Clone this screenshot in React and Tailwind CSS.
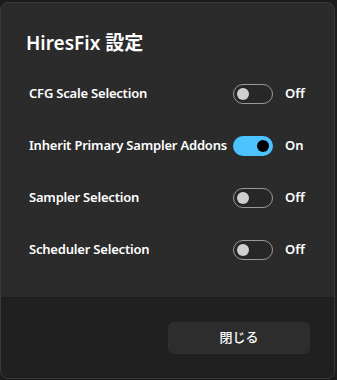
import React, { useState } from 'react'

function Toggle({ on, onChange }) {
  return (
    <button
      onClick={onChange}
      className={
        on
          ? 'flex h-5 w-10 items-center justify-end rounded-full bg-[#4cc2ff] px-[4px]'
          : 'flex h-5 w-10 items-center justify-start rounded-full border border-[#9a9a9a] bg-[#272727] px-[3px]'
      }
    >
      <span className={on ? 'block h-3 w-3 rounded-full bg-black' : 'block h-3 w-3 rounded-full bg-[#cfcfcf]'} />
    </button>
  )
}

const items = [
  { label: 'CFG Scale Selection', on: false },
  { label: 'Inherit Primary Sampler Addons', on: true },
  { label: 'Sampler Selection', on: false },
  { label: 'Scheduler Selection', on: false },
]

export default function App() {
  const [state, setState] = useState(items.map((i) => i.on))

  return (
    <div className="h-[380px] w-[337px] bg-[#1c1c1c] pt-[2px] font-['Noto_Sans','Noto_Sans_CJK_JP',sans-serif] text-white">
      <div className="flex h-[377px] w-[335px] flex-col overflow-hidden rounded-lg border border-[#3a3a3a] bg-[#2b2b2b]">
        <div className="flex-1 px-[25px] pt-[26px]">
          <h1 className="text-[19px] font-semibold leading-7">HiresFix 設定</h1>
          <div className="mt-[27px] flex flex-col gap-[32px] pl-[3px]">
            {items.map((item, i) => (
              <div key={item.label} className="flex h-5 items-center">
                <span className="flex-1 text-[13px] font-semibold tracking-[-0.2px]">{item.label}</span>
                <Toggle
                  on={state[i]}
                  onChange={() => setState((s) => s.map((v, j) => (j === i ? !v : v)))}
                />
                <span className="ml-3 w-[24px] text-[13px] font-semibold">{state[i] ? 'On' : 'Off'}</span>
              </div>
            ))}
          </div>
        </div>
        <div className="flex h-[81px] items-center justify-end border-t border-[#1e1e1e] bg-[#202020] pr-[24px]">
          <button className="h-8 w-[142px] rounded-md border border-[#2f2f2f] bg-[#2d2d2d] text-[13px] font-medium">
            閉じる
          </button>
        </div>
      </div>
    </div>
  )
}
